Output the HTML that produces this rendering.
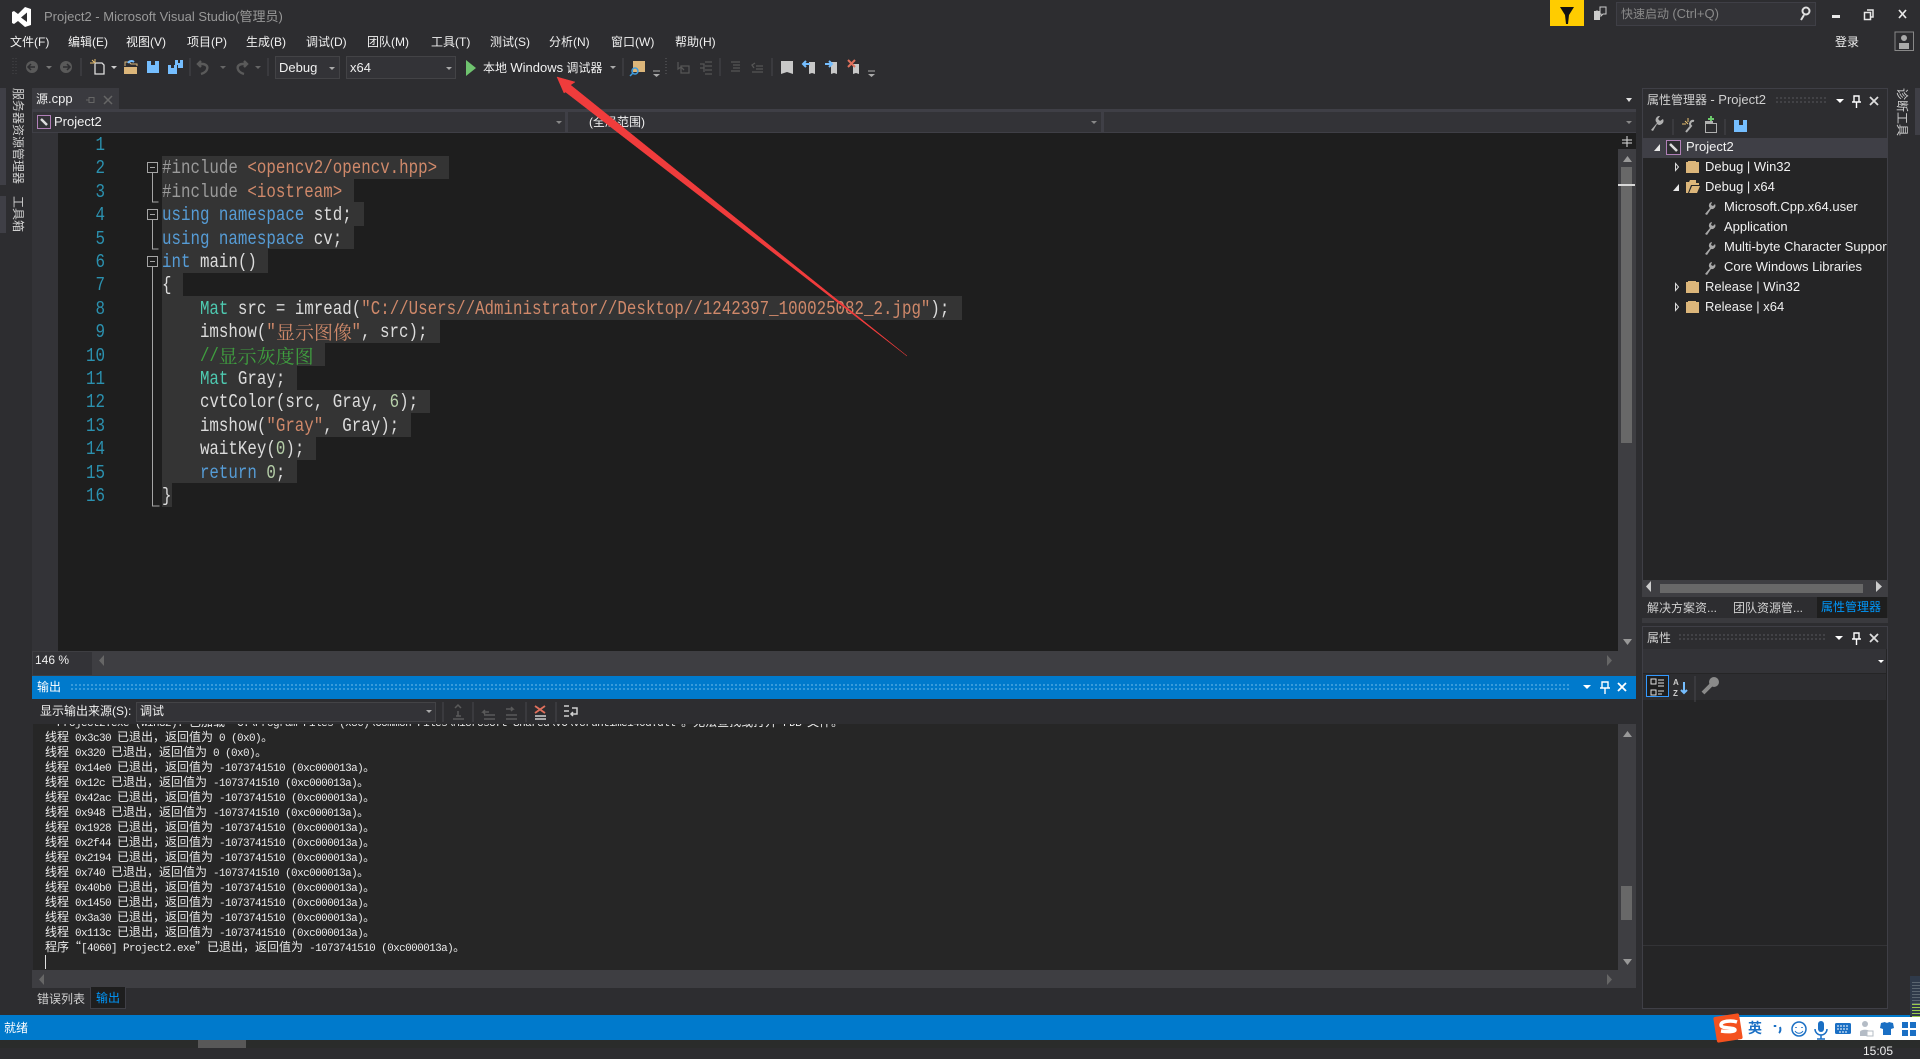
<!DOCTYPE html>
<html lang="zh"><head><meta charset="utf-8"><title>Project2 - Microsoft Visual Studio</title>
<style>
html,body{margin:0;padding:0;width:1920px;height:1048px;overflow:hidden;background:#2d2d30}
div,span{box-sizing:border-box}
.b{position:absolute}
.t{position:absolute;white-space:pre;font:12px/16px "Liberation Sans","Noto Sans CJK SC",sans-serif;color:#f1f1f1}
.t u{text-decoration:none;font-size:13px}
.tr .t{font-size:13px}
.v{position:absolute;white-space:pre;font:12px/14px "Liberation Sans","Noto Sans CJK SC",sans-serif;color:#d0d0d0;writing-mode:vertical-rl;text-orientation:sideways}
.c{position:absolute;left:162px;margin-top:1px;white-space:pre;font:19px/24px "Liberation Mono",monospace;color:#dcdcdc;transform:scaleX(.832);transform-origin:left center}
.n{position:absolute;left:45px;margin-top:1px;width:60px;text-align:right;font:19px/24px "Liberation Mono",monospace;color:#2b91af;transform:scaleX(.835);transform-origin:right center}
.s{position:absolute;left:162px;height:23.6px;background:#343434}
.h{display:inline-block;font-family:"Noto Serif CJK SC",serif;font-size:19px;transform:scaleX(1.202);transform-origin:left center;line-height:24px;vertical-align:top}
.k{color:#569cd6}.p{color:#9b9b9b}.q{color:#d0896a}.y{color:#4ec9b0}.g{color:#3f9f3f}.m{color:#b5cea8}
.o{position:absolute;left:12px;margin-top:-1px;white-space:pre;font:11px/15px "Liberation Mono",monospace;letter-spacing:-.6px;color:#eaeaea}
.o i{font:normal 12px/15px "Noto Sans CJK SC",sans-serif;letter-spacing:0}
.dots{position:absolute;background-image:radial-gradient(circle,#55555a 0.7px,transparent .9px);background-size:4px 4px}
.dotsb{position:absolute;background-image:radial-gradient(circle,#4aa6e0 0.8px,transparent 1px);background-size:4px 4px}
</style></head>
<body>
<!-- left strip -->
<div class="b" style="left:0;top:88px;width:6px;height:97px;background:#3f3f46"></div>
<div class="b" style="left:0;top:196px;width:6px;height:37px;background:#3f3f46"></div>
<div class="v" style="left:11px;top:88px">服务器资源管理器</div>
<div class="v" style="left:11px;top:196px">工具箱</div>

<!-- title and menu -->
<div class="t" style="left:44px;top:9px;color:#999;font-size:13px">Project2 - Microsoft Visual Studio(管理员)</div>
<div class="t" style="left:10px;top:34px">文件(F)</div>
<div class="t" style="left:68px;top:34px">编辑(E)</div>
<div class="t" style="left:126px;top:34px">视图(V)</div>
<div class="t" style="left:187px;top:34px">项目(P)</div>
<div class="t" style="left:246px;top:34px">生成(B)</div>
<div class="t" style="left:306px;top:34px">调试(D)</div>
<div class="t" style="left:367px;top:34px">团队(M)</div>
<div class="t" style="left:431px;top:34px">工具(T)</div>
<div class="t" style="left:490px;top:34px">测试(S)</div>
<div class="t" style="left:549px;top:34px">分析(N)</div>
<div class="t" style="left:611px;top:34px">窗口(W)</div>
<div class="t" style="left:675px;top:34px">帮助(H)</div>
<div class="t" style="left:1835px;top:34px">登录</div>
<div class="b" style="left:1550px;top:0;width:34px;height:26px;background:#ffcc00"></div>
<div class="b" style="left:1616px;top:2px;width:200px;height:24px;background:#333337;border:1px solid #3f3f46"></div>
<div class="t" style="left:1621px;top:6px;color:#8a8a8a">快速启动 <u>(Ctrl+Q)</u></div>

<!-- toolbar combos -->
<div class="b" style="left:275px;top:56px;width:65px;height:23px;background:#333337;border:1px solid #434346"></div>
<div class="t" style="left:279px;top:60px;font-size:13px">Debug</div>
<div class="b" style="left:346px;top:56px;width:110px;height:23px;background:#333337;border:1px solid #434346"></div>
<div class="t" style="left:350px;top:60px;font-size:13px">x64</div>
<div class="t" style="left:483px;top:60px">本地 <u>Windows</u> 调试器</div>

<!-- tab and nav -->
<div class="b" style="left:32px;top:88px;width:87px;height:21px;background:#3a3a3f"></div>
<div class="t" style="left:36px;top:91px">源<u>.cpp</u></div>
<div class="b" style="left:32px;top:109px;width:1604px;height:24px;background:#3f3f46"></div>
<div class="b" style="left:33px;top:112px;width:532px;height:20px;background:#333337"></div>
<div class="b" style="left:568px;top:112px;width:533px;height:20px;background:#333337"></div>
<div class="b" style="left:1104px;top:112px;width:532px;height:20px;background:#333337"></div>
<div class="t" style="left:54px;top:114px;font-size:13px">Project2</div>
<div class="t" style="left:589px;top:114px">(全局范围)</div>

<!-- editor -->
<div class="b" style="left:32px;top:133px;width:1586px;height:518px;background:#1e1e1e"></div>
<div class="b" style="left:32px;top:133px;width:26px;height:518px;background:#333337"></div>
<div class="b" style="left:1618px;top:133px;width:18px;height:543px;background:#3e3e42"></div>
<div class="b" style="left:1618px;top:133px;width:18px;height:16px;background:#1e1e1e"></div>
<div class="b" style="left:1621px;top:167px;width:11px;height:276px;background:#686868"></div>
<div class="b" style="left:1618px;top:184px;width:17px;height:2px;background:#d8d8d8"></div>

<div class="s" style="top:155.6px;width:287px"></div>
<div class="s" style="top:179px;width:192px"></div>
<div class="s" style="top:202.4px;width:202px"></div>
<div class="s" style="top:225.8px;width:192px"></div>
<div class="s" style="top:249.2px;width:106px"></div>
<div class="s" style="top:272.6px;width:21px"></div>
<div class="s" style="top:296px;width:800px"></div>
<div class="s" style="top:319.4px;width:278px"></div>
<div class="s" style="top:342.8px;width:163px"></div>
<div class="s" style="top:366.2px;width:135px"></div>
<div class="s" style="top:389.6px;width:268px"></div>
<div class="s" style="top:413px;width:249px"></div>
<div class="s" style="top:436.4px;width:154px"></div>
<div class="s" style="top:459.8px;width:135px"></div>
<div class="s" style="top:483.2px;width:10px"></div>

<div class="n" style="top:132px">1</div>
<div class="n" style="top:155px">2</div>
<div class="n" style="top:179px">3</div>
<div class="n" style="top:202px">4</div>
<div class="n" style="top:226px">5</div>
<div class="n" style="top:249px">6</div>
<div class="n" style="top:272px">7</div>
<div class="n" style="top:296px">8</div>
<div class="n" style="top:319px">9</div>
<div class="n" style="top:343px">10</div>
<div class="n" style="top:366px">11</div>
<div class="n" style="top:389px">12</div>
<div class="n" style="top:413px">13</div>
<div class="n" style="top:436px">14</div>
<div class="n" style="top:460px">15</div>
<div class="n" style="top:483px">16</div>

<div class="c" style="top:155px"><span class="p">#include </span><span class="q">&lt;opencv2/opencv.hpp&gt;</span></div>
<div class="c" style="top:179px"><span class="p">#include </span><span class="q">&lt;iostream&gt;</span></div>
<div class="c" style="top:202px"><span class="k">using namespace</span> std;</div>
<div class="c" style="top:226px"><span class="k">using namespace</span> cv;</div>
<div class="c" style="top:249px"><span class="k">int</span> main()</div>
<div class="c" style="top:272px">{</div>
<div class="c" style="top:296px">    <span class="y">Mat</span> src = imread(<span class="q">"C://Users//Administrator//Desktop//1242397_100025082_2.jpg"</span>);</div>
<div class="c" style="top:319px">    imshow(<span class="q">"<span class="h" style="width:91px">显示图像</span>"</span>, src);</div>
<div class="c g" style="top:343px">    //<span class="h" style="width:113.8px">显示灰度图</span></div>
<div class="c" style="top:366px">    <span class="y">Mat</span> Gray;</div>
<div class="c" style="top:389px">    cvtColor(src, Gray, <span class="m">6</span>);</div>
<div class="c" style="top:413px">    imshow(<span class="q">"Gray"</span>, Gray);</div>
<div class="c" style="top:436px">    waitKey(<span class="m">0</span>);</div>
<div class="c" style="top:460px">    <span class="k">return</span> <span class="m">0</span>;</div>
<div class="c" style="top:483px">}</div>

<!-- zoom bar -->
<div class="b" style="left:32px;top:651px;width:1586px;height:25px;background:#3e3e42"></div>
<div class="b" style="left:33px;top:652px;width:59px;height:23px;background:#333337"></div>
<div class="t" style="left:35px;top:652px">146 %</div>

<!-- output pane -->
<div class="b" style="left:32px;top:676px;width:1604px;height:23px;background:#007acc"></div>
<div class="t" style="left:37px;top:679px;color:#fff">输出</div>
<div class="dotsb" style="left:70px;top:683px;width:1500px;height:8px"></div>
<div class="b" style="left:32px;top:699px;width:1604px;height:25px;background:#2d2d30"></div>
<div class="t" style="left:40px;top:703px">显示输出来源(S):</div>
<div class="b" style="left:136px;top:702px;width:300px;height:20px;background:#333337;border:1px solid #434346"></div>
<div class="t" style="left:140px;top:703px">调试</div>
<div class="b" style="left:33px;top:724px;width:1585px;height:246px;background:#262626;overflow:hidden">
<div class="o" style="top:-9px"> 'Project2.exe'(Win32): <i>已加载</i> 'C:\Program Files (x86)\Common Files\Microsoft Shared\VC\vcruntime140d.dll'<i>。无法查找或打开</i> PDB <i>文件。</i></div>
<div class="o" style="top:6px"><i>线程</i> 0x3c30 <i>已退出，返回值为</i> 0 (0x0)<i>。</i></div>
<div class="o" style="top:21px"><i>线程</i> 0x320 <i>已退出，返回值为</i> 0 (0x0)<i>。</i></div>
<div class="o" style="top:36px"><i>线程</i> 0x14e0 <i>已退出，返回值为</i> -1073741510 (0xc000013a)<i>。</i></div>
<div class="o" style="top:51px"><i>线程</i> 0x12c <i>已退出，返回值为</i> -1073741510 (0xc000013a)<i>。</i></div>
<div class="o" style="top:66px"><i>线程</i> 0x42ac <i>已退出，返回值为</i> -1073741510 (0xc000013a)<i>。</i></div>
<div class="o" style="top:81px"><i>线程</i> 0x948 <i>已退出，返回值为</i> -1073741510 (0xc000013a)<i>。</i></div>
<div class="o" style="top:96px"><i>线程</i> 0x1928 <i>已退出，返回值为</i> -1073741510 (0xc000013a)<i>。</i></div>
<div class="o" style="top:111px"><i>线程</i> 0x2f44 <i>已退出，返回值为</i> -1073741510 (0xc000013a)<i>。</i></div>
<div class="o" style="top:126px"><i>线程</i> 0x2194 <i>已退出，返回值为</i> -1073741510 (0xc000013a)<i>。</i></div>
<div class="o" style="top:141px"><i>线程</i> 0x740 <i>已退出，返回值为</i> -1073741510 (0xc000013a)<i>。</i></div>
<div class="o" style="top:156px"><i>线程</i> 0x40b0 <i>已退出，返回值为</i> -1073741510 (0xc000013a)<i>。</i></div>
<div class="o" style="top:171px"><i>线程</i> 0x1450 <i>已退出，返回值为</i> -1073741510 (0xc000013a)<i>。</i></div>
<div class="o" style="top:186px"><i>线程</i> 0x3a30 <i>已退出，返回值为</i> -1073741510 (0xc000013a)<i>。</i></div>
<div class="o" style="top:201px"><i>线程</i> 0x113c <i>已退出，返回值为</i> -1073741510 (0xc000013a)<i>。</i></div>
<div class="o" style="top:216px"><i>程序“</i>[4060] Project2.exe<i>”已退出，返回值为</i> -1073741510 (0xc000013a)<i>。</i></div>
<div class="b" style="left:12px;top:231px;width:1px;height:14px;background:#e0e0e0"></div>
</div>
<div class="b" style="left:1618px;top:724px;width:18px;height:264px;background:#3e3e42"></div>
<div class="b" style="left:1621px;top:886px;width:11px;height:34px;background:#686868"></div>
<div class="b" style="left:32px;top:970px;width:1604px;height:18px;background:#3e3e42"></div>
<div class="t" style="left:37px;top:991px;color:#d0d0d0">错误列表</div>
<div class="b" style="left:90px;top:987px;width:36px;height:22px;background:#1e1e1e;border:1px solid #3f3f46;border-top:0"></div>
<div class="t" style="left:96px;top:990px;color:#0097fb">输出</div>

<!-- right panel -->
<div class="b" style="left:1642px;top:88px;width:246px;height:506px;border:1px solid #3f3f46;background:#2d2d30"></div>
<div class="t" style="left:1647px;top:92px;color:#d0d0d0">属性管理器 <u>- Project2</u></div>
<div class="dots" style="left:1775px;top:96px;width:52px;height:8px"></div>
<div class="b tr" style="left:1643px;top:138px;width:244px;height:442px;background:#252526;overflow:hidden">
  <div class="b" style="left:0;top:0;width:244px;height:20px;background:#3f3f46"></div>
  <div class="t" style="left:43px;top:1px">Project2</div>
  <div class="t" style="left:62px;top:21px">Debug | Win32</div>
  <div class="t" style="left:62px;top:41px">Debug | x64</div>
  <div class="t" style="left:81px;top:61px">Microsoft.Cpp.x64.user</div>
  <div class="t" style="left:81px;top:81px">Application</div>
  <div class="t" style="left:81px;top:101px">Multi-byte Character Support</div>
  <div class="t" style="left:81px;top:121px">Core Windows Libraries</div>
  <div class="t" style="left:62px;top:141px">Release | Win32</div>
  <div class="t" style="left:62px;top:161px">Release | x64</div>
</div>
<div class="b" style="left:1642px;top:580px;width:246px;height:17px;background:#3e3e42"></div>
<div class="b" style="left:1660px;top:584px;width:203px;height:9px;background:#686868"></div>
<div class="t" style="left:1647px;top:600px;color:#d0d0d0">解决方案资...</div>
<div class="t" style="left:1733px;top:600px;color:#d0d0d0">团队资源管...</div>
<div class="b" style="left:1817px;top:597px;width:70px;height:21px;background:#1e1e1e"></div>
<div class="t" style="left:1821px;top:599px;color:#0097fb">属性管理器</div>
<div class="b" style="left:1642px;top:618px;width:246px;height:5px;background:#3a3a3e"></div>
<div class="b" style="left:1642px;top:626px;width:246px;height:383px;border:1px solid #3f3f46;background:#252526"></div>
<div class="b" style="left:1643px;top:627px;width:244px;height:22px;background:#2d2d30"></div>
<div class="t" style="left:1647px;top:630px;color:#d0d0d0">属性</div>
<div class="dots" style="left:1678px;top:633px;width:148px;height:8px"></div>
<div class="b" style="left:1643px;top:649px;width:243px;height:24px;background:#333337"></div>
<div class="b" style="left:1643px;top:674px;width:243px;height:26px;background:#2d2d30"></div>
<div class="b" style="left:1646px;top:675px;width:23px;height:22px;border:1px solid #3399ff;background:#1e1e1e"></div>
<div class="b" style="left:1643px;top:945px;width:244px;height:1px;background:#333336"></div>
<div class="b" style="left:1915px;top:88px;width:5px;height:47px;background:#3f3f46"></div>
<div class="v" style="left:1895px;top:88px">诊断工具</div>

<!-- status + taskbar -->
<div class="b" style="left:0;top:1015px;width:1920px;height:25px;background:#007acc"></div>
<div class="t" style="left:4px;top:1020px;color:#fff">就绪</div>
<div class="b" style="left:0;top:1040px;width:1920px;height:8px;background:#2a2c2b"></div>
<div class="b" style="left:198px;top:1040px;width:48px;height:8px;background:#585858"></div>
<div class="t" style="left:1863px;top:1043px;color:#eee">15:05</div>
<div class="b" style="left:1910px;top:976px;width:10px;height:41px;background:#2f3a4a"></div>
<div class="b" style="left:1912px;top:1004px;width:8px;height:13px;background:repeating-linear-gradient(#9acb4a 0 1px,#2f3a4a 1px 3px)"></div>
<div class="b" style="left:1912px;top:982px;width:8px;height:22px;background:repeating-linear-gradient(#5a6570 0 1px,#2f3a4a 1px 3px)"></div>
<div class="b" style="left:1738px;top:1017px;width:182px;height:23px;background:#fff"></div>
<div class="t" style="left:1748px;top:1020px;color:#1a6fc4;font-weight:bold;font-size:14px">英</div>

<!-- icons overlay -->
<svg class="b" style="left:0;top:0" width="1920" height="1048" viewBox="0 0 1920 1048" fill="none">
<!-- VS logo -->
<path d="M31 9L25 7L18 14L14 11L12 12V23L14 24L18 21L25 27L31 25ZM27 12.500L21 17.500L27 22Z" fill="#fff" fill-rule="evenodd"/>
<!-- filter -->
<path d="M1560 7h14l-5 8-1 9h-2l-1-9z" fill="#111"/>
<!-- feedback -->
<path d="M1594 11h6v9h-6z" fill="#ccc"/><circle cx="1597" cy="13" r="2.500" fill="#ccc"/><path d="M1600 7h6v7h-3l-2 2v-2h-1z" stroke="#ccc"/>
<!-- search -->
<circle cx="1806" cy="11" r="3.500" stroke="#e0e0e0" stroke-width="2"/><path d="M1804 15l-3 5" stroke="#e0e0e0" stroke-width="2"/>
<!-- window btns -->
<rect x="1832" y="15" width="8" height="3" fill="#e8e8e8"/>
<path d="M1867 10h6v7h-2M1864.500 12.500h6v7h-6z" stroke="#e8e8e8" stroke-width="1.500"/>
<path d="M1899 10l7 8M1906 10l-7 8" stroke="#e8e8e8" stroke-width="1.700"/>
<rect x="1895" y="32" width="18.500" height="18.500" stroke="#888"/><circle cx="1904" cy="38" r="3" fill="#aaa"/><path d="M1899 49v-6h10v6z" fill="#aaa"/>
<!-- toolbar -->
<path d="M13 58v18M16 58v18" stroke="#47474a" stroke-dasharray="1 2"/>
<circle cx="32" cy="67" r="6" fill="#5a5a5a"/><path d="M35 67h-6m2-3l-3 3 3 3" stroke="#2d2d30" stroke-width="1.500"/>
<polygon points="46,66 52,66 49,69" fill="#777"/>
<circle cx="66" cy="67" r="6" fill="#5a5a5a"/><path d="M63 67h6m-2-3l3 3-3 3" stroke="#2d2d30" stroke-width="1.500"/>
<path d="M81 58v18M190 58v18M268 58v18M623 58v18M720 58v18M772 58v18" stroke="#48484c"/>
<path d="M95 63h7l2 2v9h-9z" stroke="#ddd" stroke-width="1.300"/><path d="M92 60l3 3M95 59v4M90 63h4" stroke="#e8c070"/>
<polygon points="111,66 117,66 114,69" fill="#ccc"/>
<path d="M124 67h13v7h-13z" fill="#dcb67a"/><path d="M125 66v-4h4l2 2h6v2" stroke="#dcb67a"/><path d="M128 63a4 4 0 0 1 6-1" stroke="#75beff" stroke-width="2"/>
<path d="M147 61h12v12h-12z" fill="#75beff"/><rect x="151" y="61" width="4" height="4" fill="#2d2d30"/>
<path d="M168 65h9v9h-9z" fill="#75beff"/><path d="M175 60h8v8h-5v-3h-3z" fill="#75beff"/><rect x="171" y="65" width="3" height="3" fill="#2d2d30"/><rect x="178" y="60" width="2" height="3" fill="#2d2d30"/>
<path d="M201 74c7-2 9-9 2-10h-4m2-3l-3 3 3 3" stroke="#5a5a5a" stroke-width="2.400"/>
<polygon points="220,66 226,66 223,69" fill="#666"/>
<path d="M244 74c-7-2-9-9-2-10h4m-2-3l3 3-3 3" stroke="#5a5a5a" stroke-width="2.400"/>
<polygon points="255,66 261,66 258,69" fill="#666"/>
<polygon points="329,67 335,67 332,70" fill="#aaa"/>
<polygon points="446,67 452,67 449,70" fill="#aaa"/>
<polygon points="466,60 476,68 466,76" fill="#6fc36f"/>
<polygon points="610,66 616,66 613,69" fill="#aaa"/>
<path d="M633 61h12v11h-12z" fill="#dcb67a"/><circle cx="635" cy="71" r="3" stroke="#3f9de0" stroke-width="1.500"/><path d="M633 73l-3 3" stroke="#3f9de0" stroke-width="1.500"/>
<path d="M653 71h7" stroke="#aaa"/><polygon points="653,74 660,74 656.500,77" fill="#aaa"/>
<path d="M666 58v18" stroke="#47474a" stroke-width="2" stroke-dasharray="1 2"/>
<path d="M678 62v7l3-2 3 3M681 66h8v7h-8z" stroke="#555" stroke-width="1.300"/>
<path d="M700 64h4v8M705 62h7M705 66h7M705 70h7M705 74h7M700 68h4" stroke="#555" stroke-width="1.300"/>
<path d="M731 62h9M733 65h7M733 68h7M731 71h9M755 63l-3 2 2 3M756 66h7M756 69h7M752 72h11" stroke="#555" stroke-width="1.300"/>
<path d="M781 61h12v13l-6-2-6 2z" fill="#c8c8c8"/>
<path d="M809 62h6v12l-3-1-3 1z" fill="#c8c8c8"/><path d="M810 64h-7m3-3l-3 3 3 3" stroke="#75beff" stroke-width="2"/>
<path d="M831 62h6v12l-3-1-3 1z" fill="#c8c8c8"/><path d="M825 64h7m-3-3l3 3-3 3" stroke="#75beff" stroke-width="2"/>
<path d="M853 64h6v10l-3-1-3 1z" fill="#c8c8c8"/><path d="M848 60l7 7M855 60l-7 7" stroke="#e0705c" stroke-width="2"/>
<path d="M868 71h7" stroke="#aaa"/><polygon points="868,74 875,74 871.500,77" fill="#aaa"/>
<polygon points="1626,98 1632,98 1629,102" fill="#e0e0e0"/>
<!-- tab -->
<path d="M86 100h3M89 97.500h5v5h-5zM89 97v6" stroke="#666"/>
<path d="M104 96l8 8M112 96l-8 8" stroke="#666" stroke-width="1.500"/>
<!-- nav -->
<rect x="37.500" y="115.500" width="13" height="13" stroke="#b180b8" fill="#333337"/><path d="M41 119l6 6" stroke="#ddd" stroke-width="2.500"/>
<polygon points="556,121 562,121 559,124" fill="#888"/><polygon points="1091,121 1097,121 1094,124" fill="#888"/><polygon points="1626,121 1632,121 1629,124" fill="#888"/>
<!-- fold -->
<g stroke="#a5a5a5">
<rect x="147.500" y="162.500" width="10" height="10" fill="#1e1e1e"/><path d="M150 167.500h5"/><path d="M152.500 173v29h6"/>
<rect x="147.500" y="209.500" width="10" height="10" fill="#1e1e1e"/><path d="M150 214.500h5"/><path d="M152.500 220v29h6"/>
<rect x="147.500" y="256.500" width="10" height="10" fill="#1e1e1e"/><path d="M150 261.500h5"/><path d="M152.500 267v239h7"/>
</g>
<!-- editor scroll -->
<path d="M1627 136v11M1622 140h10M1622 143h10" stroke="#ddd"/>
<polygon points="1623,162 1632,162 1627.500,156" fill="#999"/>
<polygon points="1623,639 1632,639 1627.500,645" fill="#999"/>
<polygon points="104,655 104,666 99,660.500" fill="#666"/>
<polygon points="1607,655 1607,666 1612,660.500" fill="#666"/>
<!-- out hdr -->
<polygon points="1583,685 1591,685 1587,689" fill="#fff"/>
<path d="M1602 682h6v6h-6zM1600 688h10M1605 688v6" stroke="#fff" stroke-width="1.400"/>
<path d="M1618 683l8 8M1626 683l-8 8" stroke="#fff" stroke-width="1.800"/>
<!-- out tb -->
<path d="M443 702v20M473 702v20M526 702v20M556 702v20" stroke="#48484c"/>
<polygon points="426,710 432,710 429,713" fill="#aaa"/>
<path d="M453 719h11M456 716h5M458 711v5M455 708l3-3 3 3" stroke="#5a5a5a" stroke-width="1.500"/>
<path d="M489 712h-6l2-2m-2 2l2 2M484 715h11M484 719h11" stroke="#5a5a5a" stroke-width="1.500"/>
<path d="M506 709h7l-2-2m2 2l-2 2M506 715h11M506 719h11" stroke="#5a5a5a" stroke-width="1.500"/>
<path d="M535 716h11M535 719h11" stroke="#d0d0d0" stroke-width="1.500"/><path d="M535 706l10 7M545 706l-10 7" stroke="#e0705c" stroke-width="1.800"/>
<path d="M564 706h5M564 711h5M564 716h5" stroke="#d0d0d0" stroke-width="1.500"/><path d="M572 708h5v6h-6m2-2l-2 2 2 2" stroke="#d0d0d0" stroke-width="1.500"/>
<polygon points="1623,737 1632,737 1627.500,731" fill="#999"/>
<polygon points="1623,959 1632,959 1627.500,965" fill="#999"/>
<polygon points="44,974 44,985 39,979.500" fill="#666"/>
<polygon points="1607,974 1607,985 1612,979.500" fill="#666"/>
<!-- right hdr -->
<polygon points="1836,99 1844,99 1840,103" fill="#fff"/>
<path d="M1854 96h5v6h-5zM1852 102h9M1856.500 102v6" stroke="#fff" stroke-width="1.400"/>
<path d="M1870 97l8 8M1878 97l-8 8" stroke="#ddd" stroke-width="1.800"/>
<path d="M1651 130l6-7a4 4 0 0 1 3-7l-2 3 2 2 3-2a4 4 0 0 1-6 5l-4 7z" fill="#b0b0b0"/>
<path d="M1673 119v16M1725 119v16" stroke="#48484c"/>
<path d="M1685 121l3 3M1682 124h4M1688 118v4" stroke="#e8c070"/><path d="M1686 132l5-6a3 3 0 0 1 3-5" stroke="#b0b0b0" stroke-width="2"/>
<path d="M1708 119h6M1711 116v6" stroke="#6ccb6c" stroke-width="2"/><rect x="1705.500" y="123.500" width="11" height="9" stroke="#b0b0b0"/><rect x="1705" y="121" width="8" height="3" fill="#b0b0b0"/>
<path d="M1734 120h13v12h-13z" fill="#75beff"/><rect x="1739" y="120" width="4" height="5" fill="#2d2d30"/>
<!-- tree -->
<polygon points="1654,151 1660,151 1660,144" fill="#e8e8e8"/>
<rect x="1666.500" y="140.500" width="14" height="14" stroke="#b180b8" fill="#2d2d30"/><path d="M1670 144l7 7" stroke="#ddd" stroke-width="2.600"/>
<g stroke="#ddd"><path d="M1675.500 163.500l3 3.500-3 3.500z"/><path d="M1675.500 283.500l3 3.500-3 3.500z"/><path d="M1675.500 303.500l3 3.500-3 3.500z"/></g>
<polygon points="1673,191 1679,191 1679,184" fill="#e8e8e8"/>
<g fill="#dcb67a">
<path d="M1686 162h2v-1h8v1h3v11h-13z"/>
<path d="M1686 182h3l1-2h6v3h3v2h-8l-3 8h-2z"/><path d="M1692 186h8l-3 7h-8z"/>
<path d="M1686 282h2v-1h8v1h3v11h-13z"/>
<path d="M1686 302h2v-1h8v1h3v11h-13z"/>
</g>
<g fill="#a8a8a8">
<path d="M1705 214l5-6a3.500 3.500 0 0 1 2-6l-1 3 2 1 2-2a3.500 3.500 0 0 1-4 5l-4 6z"/>
<path d="M1705 234l5-6a3.500 3.500 0 0 1 2-6l-1 3 2 1 2-2a3.500 3.500 0 0 1-4 5l-4 6z"/>
<path d="M1705 254l5-6a3.500 3.500 0 0 1 2-6l-1 3 2 1 2-2a3.500 3.500 0 0 1-4 5l-4 6z"/>
<path d="M1705 274l5-6a3.500 3.500 0 0 1 2-6l-1 3 2 1 2-2a3.500 3.500 0 0 1-4 5l-4 6z"/>
</g>
<polygon points="1651,581 1651,592 1646,586.500" fill="#ccc"/>
<polygon points="1876,581 1876,592 1882,586.500" fill="#ccc"/>
<!-- props hdr -->
<polygon points="1835,636 1843,636 1839,640" fill="#fff"/>
<path d="M1854 633h5v6h-5zM1852 639h9M1856.500 639v6" stroke="#fff" stroke-width="1.400"/>
<path d="M1870 634l8 8M1878 634l-8 8" stroke="#ddd" stroke-width="1.800"/>
<polygon points="1878,660 1884,660 1881,663" fill="#fff"/>
<path d="M1651 679h5v5h-5zM1651 690h5v5h-5zM1658 680h6M1658 683h6M1658 686h6M1658 691h6M1658 694h4" stroke="#e0e0e0"/>
<text x="1673" y="685" font-family="Liberation Sans" font-size="8" font-weight="bold" fill="#ccc">A</text>
<text x="1673" y="696" font-family="Liberation Sans" font-size="8" font-weight="bold" fill="#ccc">Z</text>
<path d="M1684 682v11m-3-3l3 3 3-3" stroke="#75beff" stroke-width="2"/>
<path d="M1695 676v26" stroke="#48484c"/>
<circle cx="1714" cy="682" r="5" fill="#8a8a8a"/><path d="M1711 685l-8 8" stroke="#8a8a8a" stroke-width="4"/>
<!-- IME -->
<g transform="rotate(-9 1728 1028)"><rect x="1715" y="1015" width="26" height="26" rx="2" fill="#f4511e"/></g>
<path d="M1737 1022c-6-2-16-1-16 3 0 4 14 2 14 5 0 2-8 2-14 1" stroke="#fff" stroke-width="3.500"/>
<path d="M1775 1025v2" stroke="#1a6fc4" stroke-width="2.500"/><path d="M1780 1027c1 3 0 5-1 6" stroke="#1a6fc4" stroke-width="2"/>
<circle cx="1799" cy="1029" r="7" stroke="#1a6fc4" stroke-width="1.500"/><path d="M1796 1027v1M1802 1027v1" stroke="#1a6fc4" stroke-width="1.500"/><path d="M1795 1031c2 3 6 3 8 0" stroke="#1a6fc4"/>
<rect x="1818" y="1021" width="6" height="11" rx="3" fill="#1a6fc4"/><path d="M1815 1029a6 6 0 0 0 12 0M1821 1035v4M1817 1039h8" stroke="#1a6fc4" stroke-width="1.500"/>
<rect x="1835" y="1023" width="16" height="11" rx="1.500" fill="#1a6fc4"/><path d="M1837 1026h12M1837 1029h12M1839 1032h8" stroke="#fff" stroke-dasharray="2 1"/>
<circle cx="1865" cy="1024" r="3" fill="#b4bcc6"/><path d="M1860 1036v-4c0-3 10-3 10 0v4z" fill="#b4bcc6"/><rect x="1867" y="1031" width="6" height="5" stroke="#b4bcc6" fill="#fff"/>
<path d="M1881 1023l4-1c1 1 3 1 4 0l4 1 1 5-3 1v6h-8v-6l-3-1z" fill="#1a6fc4"/>
<rect x="1902" y="1022" width="6" height="6" fill="#1a6fc4"/><rect x="1910" y="1022" width="6" height="6" fill="#1a6fc4"/><rect x="1902" y="1030" width="6" height="6" fill="#1a6fc4"/><rect x="1910" y="1030" width="6" height="6" fill="#1a6fc4"/>
<!-- red arrow -->
<polygon points="557,77 575,82 570.500,85 907,356 565.500,92 564,93" fill="#f03c3c" stroke="#f03c3c" stroke-width=".5"/>
</svg>
</body></html>
